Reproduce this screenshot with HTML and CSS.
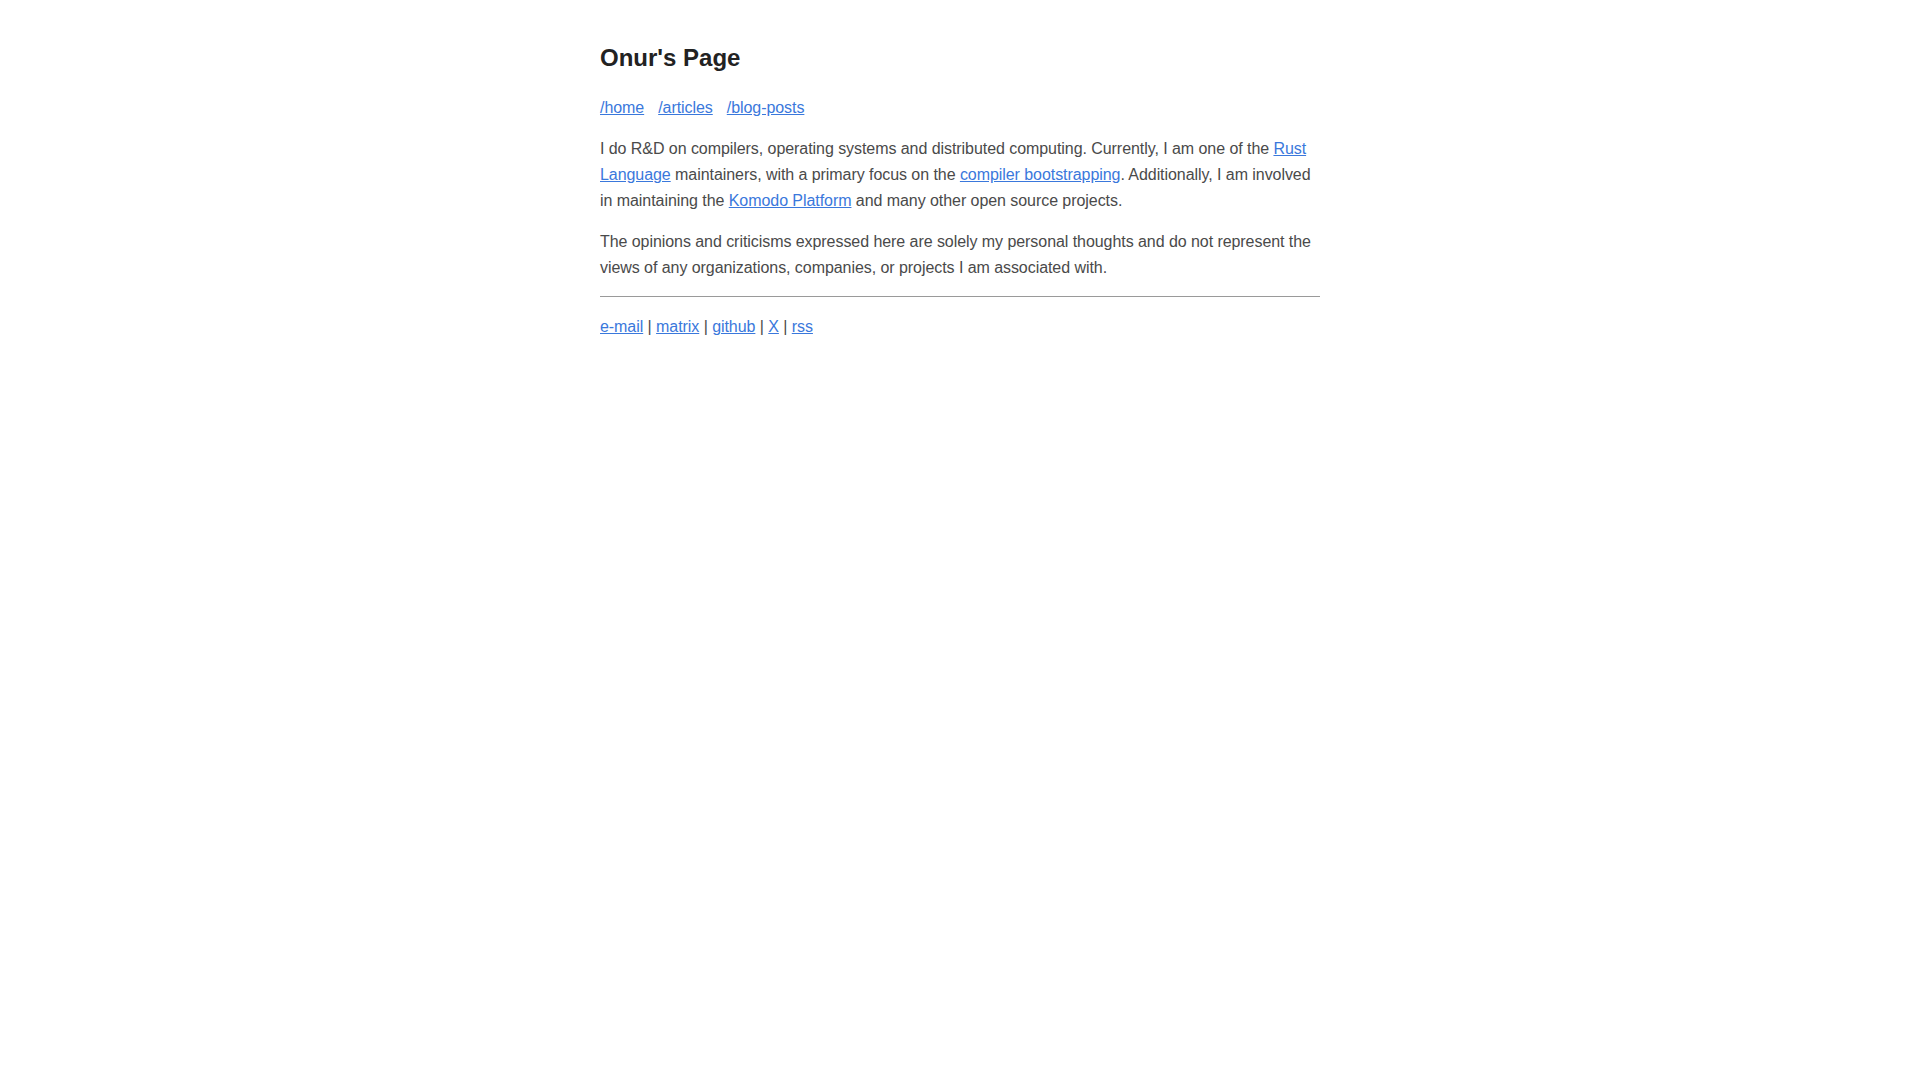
FILE: index.html
```html
<!DOCTYPE html>
<html lang="en">
<head>
<meta charset="utf-8">
<title>Onur's Page</title>
<link rel="stylesheet" href="styles.css">
</head>
<body>
<main class="page">
  <h1 class="title">Onur's Page</h1>
  <nav class="nav">
    <a href="#">/home</a>
    <a href="#">/articles</a>
    <a href="#">/blog-posts</a>
  </nav>
  <p class="text">I do R&amp;D on compilers, operating systems and distributed computing. Currently, I am one of the <a href="#">Rust Language</a> maintainers, with a primary focus on the <a href="#">compiler bootstrapping</a>. Additionally, I am involved in maintaining the <a href="#">Komodo Platform</a> and many other open source projects.</p>
  <p class="text">The opinions and criticisms expressed here are solely my personal thoughts and do not represent the views of any organizations, companies, or projects I am associated with.</p>
  <hr class="rule">
  <footer class="footer"><a href="#">e-mail</a> | <a href="#">matrix</a> | <a href="#">github</a> | <a href="#">X</a> | <a href="#">rss</a></footer>
</main>
</body>
</html>
```
FILE: styles.css
```css
html, body {
  margin: 0;
  padding: 0;
  background: #ffffff;
}
body {
  font-family: "Liberation Sans", Arial, sans-serif;
  font-size: 16px;
  line-height: 1.6;
  letter-spacing: -0.06px;
  color: #4a4a4a;
}
a {
  color: #3a78dc;
  text-decoration: underline;
}
.page {
  max-width: 720px;
  margin: 0 auto;
  padding-top: 44px;
}
.title {
  margin: 0 0 22px;
  font-size: 24px;
  line-height: 1.2;
  font-weight: bold;
  letter-spacing: 0;
  color: #222222;
}
.nav {
  display: flex;
  gap: 14px;
  margin-bottom: 16px;
}
.text {
  margin: 0 0 16px;
}
.rule {
  border: 0;
  border-top: 1px solid #9a9a9a;
  height: 0;
  margin: 16px 0 17px;
}
.footer {
  margin: 0;
}
```
